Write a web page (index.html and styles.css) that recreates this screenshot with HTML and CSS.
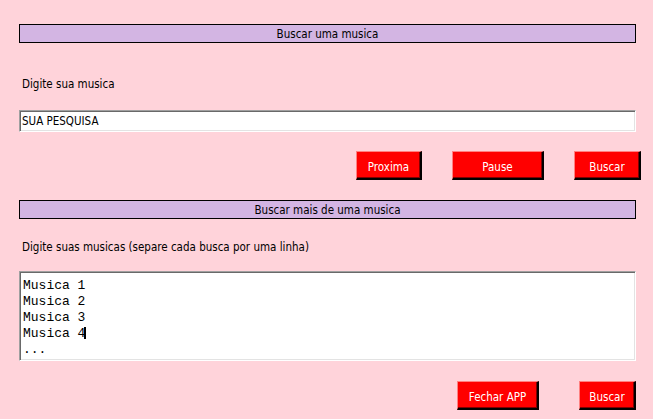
FILE: index.html
```html
<!DOCTYPE html>
<html lang="pt">
<head>
<meta charset="utf-8">
<title>Buscar musica</title>
<link rel="stylesheet" href="styles.css">
</head>
<body>
<div class="app">
  <div class="header h1">Buscar uma musica</div>
  <div class="label l1">Digite sua musica</div>
  <div class="entry">SUA PESQUISA</div>
  <div class="row row1">
    <button class="btn b-prox">Proxima</button>
    <button class="btn b-pause">Pause</button>
    <button class="btn b-busca1">Buscar</button>
  </div>
  <div class="header h2">Buscar mais de uma musica</div>
  <div class="label l2">Digite suas musicas (separe cada busca por uma linha)</div>
  <div class="text">
    <div class="line">Musica 1</div>
    <div class="line">Musica 2</div>
    <div class="line">Musica 3</div>
    <div class="line">Musica 4<span class="caret"></span></div>
    <div class="line">...</div>
  </div>
  <div class="row row2">
    <button class="btn b-fechar">Fechar APP</button>
    <button class="btn b-busca2">Buscar</button>
  </div>
</div>
</body>
</html>
```

FILE: styles.css
```css
html, body {
  margin: 0;
  padding: 0;
  background: #ffd3da;
}
body {
  width: 653px;
  height: 419px;
  overflow: hidden;
  font-family: "DejaVu Sans Condensed", "DejaVu Sans", sans-serif;
  font-size: 11.5px;
  color: #000;
}
.app {
  display: flex;
  flex-direction: column;
  padding: 24px 17px 0 19px;
}
.header {
  height: 17px;
  line-height: 18px;
  border: 1px solid #000;
  background: #d3b5e3;
  text-align: center;
}
.label {
  height: 14px;
  line-height: 15px;
  padding-left: 3px;
}
.l1 { margin-top: 34px; }
.l2 { margin-top: 21px; }
.entry {
  margin-top: 19px;
  height: 20px;
  line-height: 21px;
  background: #fff;
  border: 1px solid;
  border-color: #a0a0a0 #fff #fff #a0a0a0;
  box-shadow: inset 1px 1px 0 #696969, inset -1px -1px 0 #e3e3e3;
  padding-left: 2px;
}
.row {
  display: flex;
  height: 29px;
}
.row1 {
  margin-top: 19px;
  padding-left: 337px;
  gap: 30px;
  margin-right: -5px;
}
.row2 {
  margin-top: 20px;
  padding-left: 438px;
  gap: 40px;
}
.btn {
  box-sizing: border-box;
  height: 29px;
  padding: 3px 0 0 0;
  margin: 0;
  background: #ff0000;
  color: #fff;
  font-family: "DejaVu Sans Condensed", "DejaVu Sans", sans-serif;
  font-size: 11.5px;
  border-style: solid;
  border-width: 1px 2px 2px 1px;
  border-color: #ff8080 #000 #000 #ff8080;
  box-shadow: inset -1px -1px 0 #800000;
}
.b-prox { width: 66px; }
.b-pause { width: 92px; }
.b-busca1 { width: 67px; }
.b-fechar { width: 82px; }
.b-busca2 { width: 57px; }
.h2 { margin-top: 20px; }
.text {
  margin-top: 17px;
  height: 82px;
  background: #fff;
  border: 1px solid;
  border-color: #a0a0a0 #fff #fff #a0a0a0;
  box-shadow: inset 1px 1px 0 #696969, inset -1px -1px 0 #e3e3e3;
  padding: 6px 0 0 3px;
  box-sizing: content-box;
  font-family: "Liberation Mono", "Courier New", monospace;
  font-size: 13px;
  line-height: 16px;
  overflow: hidden;
}
.caret {
  display: inline-block;
  width: 2px;
  height: 12px;
  background: #000;
  vertical-align: -2px;
  margin-left: -1px;
}
```
